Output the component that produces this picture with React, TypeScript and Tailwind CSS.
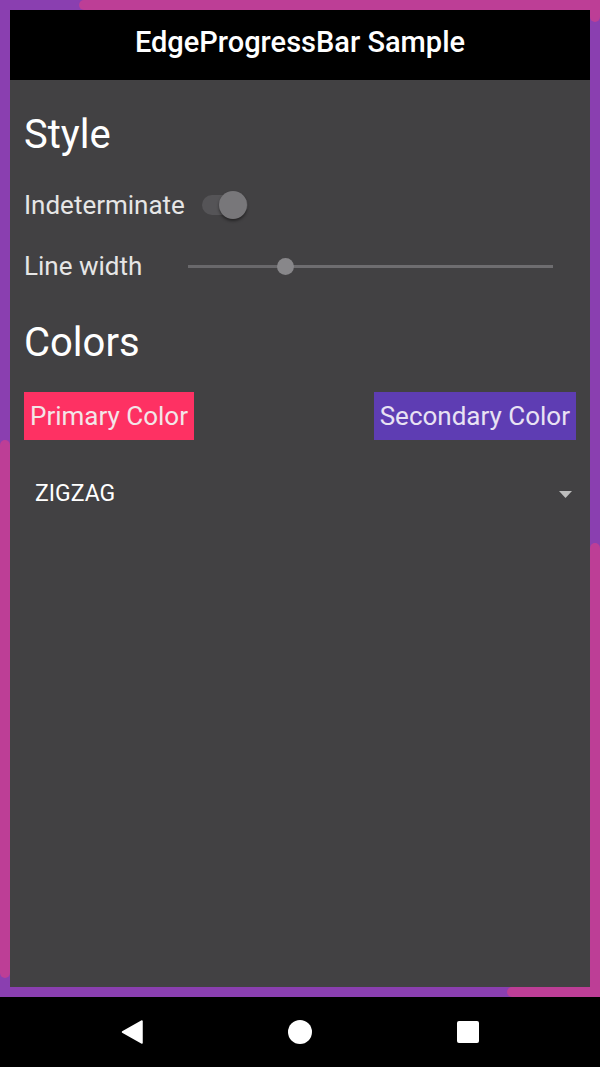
import React from "react";

export default function App() {
  return (
    <div className="w-[600px] h-[1067px] bg-black flex flex-col" style={{ fontFamily: "Roboto, 'Noto Sans', sans-serif" }}>
      <div className="relative h-[997px] bg-[#8a3fb0] p-[10px]">
        {/* edge progress overlay segments */}
        <div className="absolute left-[79px] right-0 top-0 h-[10px] bg-[#bd3e96] rounded-l-[5px]" />
        <div className="absolute right-0 top-0 w-[10px] h-[22px] bg-[#bd3e96] rounded-b-[5px]" />
        <div className="absolute right-0 top-[543px] bottom-0 w-[10px] bg-[#bd3e96] rounded-t-[5px]" />
        <div className="absolute left-[507px] right-0 bottom-0 h-[10px] bg-[#bd3e96] rounded-l-[5px]" />
        <div className="absolute left-0 top-[440px] h-[538px] w-[10px] bg-[#bd3e96] rounded-[5px]" />

        <div className="relative h-full bg-[#424143] flex flex-col">
          <div className="h-[70px] bg-black flex items-center justify-center text-white text-[29px] font-medium pb-[4px]">
            EdgeProgressBar Sample
          </div>
          <div className="pl-[14px] flex flex-col">
            <div className="h-[38px] mt-[36px] flex items-center text-white text-[40px] leading-none">Style</div>
            <div className="h-[40px] mt-[31px] flex items-center">
              <span className="text-[#e6e6e6] text-[26px]">Indeterminate</span>
              <div className="relative ml-[17px] w-[46px] h-[20px]">
                <div className="absolute inset-0 rounded-full bg-[#555457]" />
                <div className="absolute left-[17px] top-[-4px] w-[28px] h-[28px] rounded-full bg-[#78777a] shadow-[0_2px_3px_rgba(0,0,0,0.45)]" />
              </div>
            </div>
            <div className="h-[40px] mt-[21px] flex items-center">
              <span className="text-[#e6e6e6] text-[26px] w-[164px]">Line width</span>
              <div className="relative w-[365px] h-[18px] flex items-center">
                <div className="h-[3px] w-[98px] bg-[#69686b]" />
                <div className="h-[3px] flex-1 bg-[#6e6d70]" />
                <div className="absolute left-[89px] top-[1px] w-[17px] h-[17px] rounded-full bg-[#88878a]" />
              </div>
            </div>
            <div className="h-[40px] mt-[37px] flex items-center text-white text-[40px] leading-none">Colors</div>
            <div className="mt-[29px] flex justify-between pr-[14px]">
              <div className="h-[48px] bg-[#fe3163] text-[#f3e5e8] text-[26px] flex items-center px-[6px]">Primary Color</div>
              <div className="h-[48px] bg-[#5e3db3] text-[#e8e2f3] text-[26px] flex items-center px-[6px]">Secondary Color</div>
            </div>
            <div className="mt-[34px] h-[40px] flex items-center justify-between pl-[11px] pr-[18px]">
              <span className="text-white text-[23px]">ZIGZAG</span>
              <svg width="13" height="7" viewBox="0 0 13 7"><path d="M0 0 L13 0 L6.5 7 Z" fill="#bdbdbd" /></svg>
            </div>
          </div>
        </div>
      </div>
      <div className="flex-1 flex items-center justify-between px-[121px]">
        <svg width="22" height="24" viewBox="0 0 22 24"><path d="M21 1 L21 23 L1.5 12 Z" fill="white" stroke="white" strokeWidth="1.5" strokeLinejoin="round" /></svg>
        <div className="w-[24px] h-[24px] rounded-full bg-white" />
        <div className="w-[22px] h-[22px] rounded-[2px] bg-white" />
      </div>
    </div>
  );
}
